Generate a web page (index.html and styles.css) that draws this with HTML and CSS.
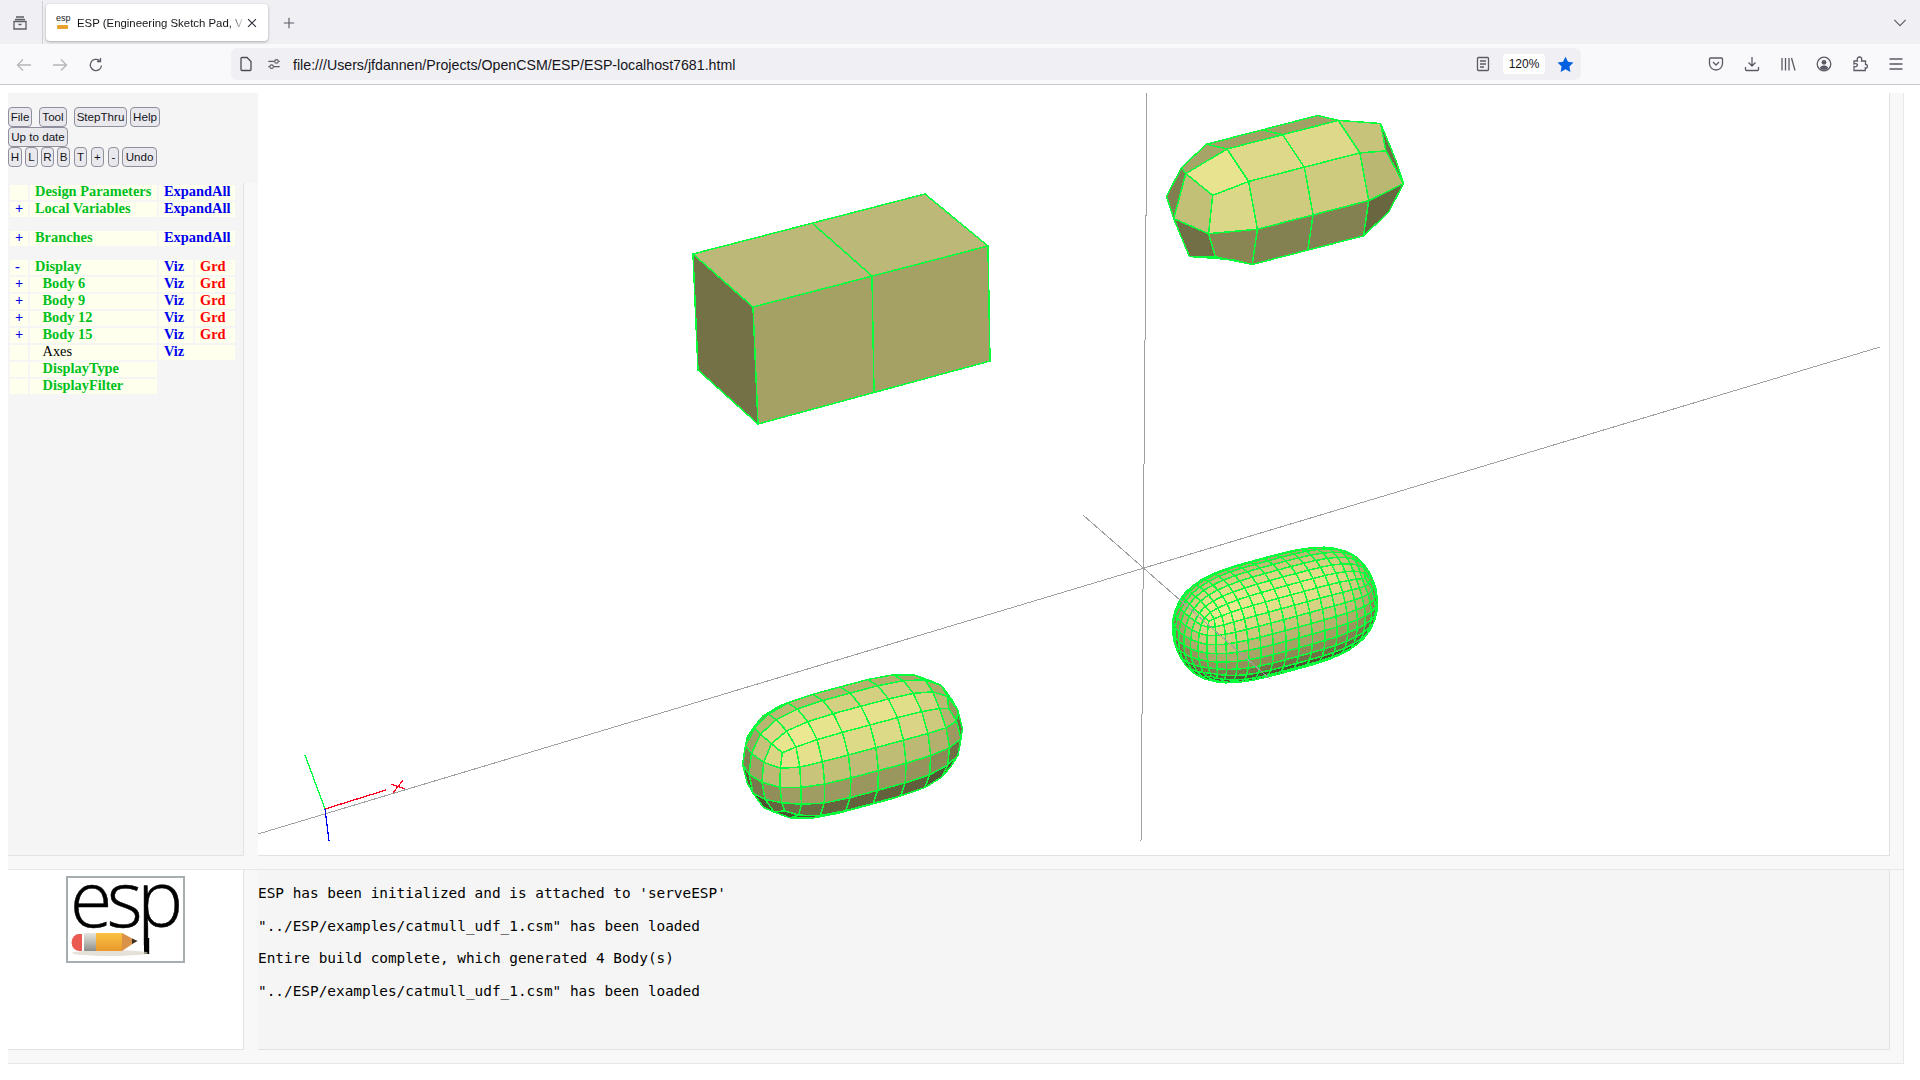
FILE: index.html
```html
<!DOCTYPE html>
<html lang="en">
<head>
<meta charset="utf-8">
<title>ESP (Engineering Sketch Pad, Version)</title>
<link rel="stylesheet" href="styles.css">
</head>
<body>
<header class="chrome">
  <div class="tabbar">
    <div class="tabs-left">
      <svg class="ico" viewBox="0 0 16 16"><path d="M3 4.500h10M4 2h8M2 6.500h12v7.500H2zM6.500 9.500h3"/></svg>
    </div>
    <div class="tab">
      <span class="favicon"><span class="fav-text">esp</span><span class="fav-pencil"></span></span>
      <span class="tab-title">ESP (Engineering Sketch Pad, V</span>
      <svg class="ico ico-x" viewBox="0 0 16 16"><path d="M3.500 3.500l9 9M12.500 3.500l-9 9"/></svg>
    </div>
    <svg class="ico ico-plus" viewBox="0 0 16 16"><path d="M8 2v12M2 8h12"/></svg>
    <svg class="ico ico-chev" viewBox="0 0 16 16"><path d="M1.500 4.500L8 11l6.500-6.500"/></svg>
  </div>
  <div class="toolbar">
    <svg class="ico ico-dim nav-back" viewBox="0 0 16 16"><path d="M15 8H1.500M7 2.500L1.500 8 7 13.500"/></svg>
    <svg class="ico ico-dim nav-fwd" viewBox="0 0 16 16"><path d="M1 8h13.500M9 2.500L14.500 8 9 13.500"/></svg>
    <svg class="ico nav-reload" viewBox="0 0 16 16"><path d="M13.500 8.500A5.600 5.600 0 1 1 11.500 3.600M12.500 1v3.500H9"/></svg>
    <div class="urlbar">
      <svg class="ico ico-doc" viewBox="0 0 16 16"><path d="M3 2.500a1 1 0 0 1 1-1h5l4 4v8a1 1 0 0 1-1 1H4a1 1 0 0 1-1-1z"/></svg>
      <svg class="ico ico-perm" viewBox="0 0 16 16"><path d="M1.500 5h7M13 5h1.500M1.500 11H3M8 11h6.500"/><circle cx="10.800" cy="5" r="2"/><circle cx="5.300" cy="11" r="2"/></svg>
      <span class="url">file:///Users/jfdannen/Projects/OpenCSM/ESP/ESP-localhost7681.html</span>
      <svg class="ico ico-reader" viewBox="0 0 16 16"><path d="M3.500 1.500h9a1 1 0 0 1 1 1v11a1 1 0 0 1-1 1h-9a1 1 0 0 1-1-1v-11a1 1 0 0 1 1-1zM5 5h6M5 8h6M5 11h4"/></svg>
      <span class="zoomlevel">120%</span>
      <svg class="ico ico-star" viewBox="0 0 16 16"><path class="fill-star" d="M8 .7l2.300 4.800 5.200.7-3.800 3.600.9 5.200L8 12.500 3.400 15l.9-5.200L.5 6.200l5.200-.7z"/></svg>
    </div>
    <div class="tool-icons">
      <svg class="ico" viewBox="0 0 16 16"><path d="M2.500 2h11a1 1 0 0 1 1 1v4.500a6.500 6.500 0 0 1-13 0V3a1 1 0 0 1 1-1zM5 6l3 3 3-3"/></svg>
      <svg class="ico" viewBox="0 0 16 16"><path d="M8 1v9M4.500 6.500L8 10l3.500-3.500M1.500 11v2.500a1 1 0 0 0 1 1h11a1 1 0 0 0 1-1V11"/></svg>
      <svg class="ico" viewBox="0 0 16 16"><path d="M2 2v12.500M5.500 2v12.500M9 2v12.500M11.500 2l3.500 12.500"/></svg>
      <svg class="ico" viewBox="0 0 16 16"><circle cx="8" cy="8" r="6.800"/><circle class="fill-ink" cx="8" cy="6.300" r="2.400"/><path class="fill-ink" d="M3.800 12c1-2 2.500-2.500 4.200-2.500s3.200.5 4.200 2.500c-1 1.300-2.500 2-4.200 2s-3.200-.7-4.200-2z"/></svg>
      <svg class="ico" viewBox="0 0 16 16"><path d="M2 5h3.500c-.8-3 .5-4 2-4s2.800 1 2 4H13.500v3.500c3-.5 2 5-.2 3.500v2.500H2v-4c2.500.8 3.500-1 3.500-1.500S4.500 7 2 8z"/></svg>
      <svg class="ico" viewBox="0 0 16 16"><path d="M1.500 3h13M1.500 8h13M1.500 13h13"/></svg>
    </div>
  </div>
</header>

<main class="page">
  <section class="left-top">
    <div class="btn-row">
      <button class="btn w-file">File</button>
      <button class="btn w-tool ml7">Tool</button>
      <button class="btn w-step ml7">StepThru</button>
      <button class="btn w-help ml3">Help</button>
    </div>
    <div class="btn-row">
      <button class="btn w-date">Up to date</button>
    </div>
    <div class="btn-row">
      <button class="btn w-h">H</button>
      <button class="btn w-s ml3">L</button>
      <button class="btn w-s ml3">R</button>
      <button class="btn w-s ml3">B</button>
      <button class="btn w-s ml4">T</button>
      <button class="btn w-s ml4">+</button>
      <button class="btn w-m ml4">-</button>
      <button class="btn w-undo ml3">Undo</button>
    </div>
  </section>

  <section class="frame frame-tree">
    <div class="pane pane-tree">
      <table class="tree">
        <colgroup><col class="c1"><col class="c2"><col class="c3"><col class="c4"></colgroup>
        <tr><td></td><td class="g">Design Parameters</td><td class="b" colspan="2">ExpandAll</td></tr>
        <tr><td class="b pm">+</td><td class="g">Local Variables</td><td class="b" colspan="2">ExpandAll</td></tr>
        <tr class="sp"><td colspan="4"></td></tr>
        <tr><td class="b pm">+</td><td class="g">Branches</td><td class="b" colspan="2">ExpandAll</td></tr>
        <tr class="sp"><td colspan="4"></td></tr>
        <tr><td class="b pm minus">-</td><td class="g">Display</td><td class="b">Viz</td><td class="r">Grd</td></tr>
        <tr><td class="b pm">+</td><td class="g in">Body 6</td><td class="b">Viz</td><td class="r">Grd</td></tr>
        <tr><td class="b pm">+</td><td class="g in">Body 9</td><td class="b">Viz</td><td class="r">Grd</td></tr>
        <tr><td class="b pm">+</td><td class="g in">Body 12</td><td class="b">Viz</td><td class="r">Grd</td></tr>
        <tr><td class="b pm">+</td><td class="g in">Body 15</td><td class="b">Viz</td><td class="r">Grd</td></tr>
        <tr><td></td><td class="k in">Axes</td><td class="b" colspan="2">Viz</td></tr>
        <tr><td></td><td class="g in">DisplayType</td><td class="none" colspan="2"></td></tr>
        <tr><td></td><td class="g in">DisplayFilter</td><td class="none" colspan="2"></td></tr>
      </table>
    </div>
  </section>

  <section class="frame frame-main">
    <div class="pane pane-canvas">
      <svg class="scene" viewBox="258 93 1631 762" width="1631" height="762">
        <line class="axis" x1="258" y1="834" x2="1880" y2="347"/>
        <line class="axis" x1="1147" y1="93" x2="1141" y2="841"/>

        <polygon class="box-top" points="693,254 925,194 988,246 753,307"/>
        <polygon class="box-front" points="753,307 988,246 990,361 758,424"/>
        <polygon class="box-left" points="693,254 753,307 758,424 698,370"/>
        <path class="edge" d="M693,254L925,194L988,246L990,361L758,424L698,370ZM693,254L753,307L758,424M753,307L988,246M812,223L872,276L874,392"/>

        <g class="mesh" data-level="1" data-cx="1285" data-cy="190" data-sx="0.945" data-sy="0.945"></g>
        <g class="mesh" data-level="2" data-cx="852.500" data-cy="746.500" data-sx="0.935" data-sy="0.974"></g>
        <g class="mesh" data-level="3" data-cx="1275" data-cy="615" data-sx="0.885" data-sy="0.935"></g>

        <line class="axis" x1="1083" y1="515" x2="1270" y2="679"/>

        <line class="ax-g" x1="325" y1="809" x2="305" y2="755"/>
        <line class="ax-r" x1="325" y1="809" x2="386" y2="790"/>
        <line class="ax-b" x1="325" y1="809" x2="329" y2="841"/>
        <path class="ax-l" d="M393,793L403,780M391,784L405,789"/>
      </svg>
    </div>
  </section>

  <section class="frame frame-logo">
    <div class="pane pane-logo">
      <svg class="logo" viewBox="0 0 119 87" width="119" height="87">
        <defs>
          <linearGradient id="pb" x1="0" y1="0" x2="0" y2="1"><stop offset="0" stop-color="#fbc344"/><stop offset="1" stop-color="#e8982a"/></linearGradient>
          <linearGradient id="pm" x1="0" y1="0" x2="0" y2="1"><stop offset="0" stop-color="#e6e6e0"/><stop offset=".5" stop-color="#bdbdb8"/><stop offset="1" stop-color="#8c8c88"/></linearGradient>
        </defs>
        <rect class="logo-border" x="1" y="1" width="117" height="85"/>
        <text class="logo-text" x="4" y="51">esp</text>
        <rect class="logo-stem" x="78" y="62" width="5.200" height="16"/>
        <ellipse class="pencil-shadow" cx="44" cy="77" rx="38" ry="3"/>
        <path class="p-eraser" d="M16 58h-3a7 8 0 0 0 0 17h3z"/>
        <rect x="18" y="57" width="13" height="18" fill="url(#pm)"/>
        <rect x="30" y="57" width="26" height="18" fill="url(#pb)"/>
        <path class="p-wood" d="M56 57l15 8-15 10z"/>
        <path class="p-tip" d="M66 62.500l5.500 2.500-5.500 3z"/>
      </svg>
    </div>
  </section>

  <section class="frame frame-msg">
    <div class="pane pane-msg">
      <p>ESP has been initialized and is attached to 'serveESP'</p>
      <p>"../ESP/examples/catmull_udf_1.csm" has been loaded</p>
      <p>Entire build complete, which generated 4 Body(s)</p>
      <p>"../ESP/examples/catmull_udf_1.csm" has been loaded</p>
    </div>
  </section>
</main>
<script src="script.js"></script>
</body>
</html>
```
FILE: styles.css
```css
* { box-sizing: border-box; }
html, body { margin: 0; padding: 0; background: #fff; overflow: hidden; }
body { width: 1920px; height: 1080px; font-family: "Liberation Sans", Arial, sans-serif; color: #15141a; }

.ico { width: 16px; height: 16px; flex: none; fill: none; stroke: #5b5b66; stroke-width: 1.3; }
.ico-dim { stroke: #b4b4bb; }

.chrome { height: 85px; border-bottom: 1px solid #c9c9cf; }
.tabbar { height: 44px; background: #f0f0f4; display: flex; align-items: center; padding-top: 1px; }
.tabs-left { width: 43px; height: 43px; padding-left: 12px; display: flex; align-items: center; border-right: 1px solid #cfcfd6; }
.tab { margin-left: 3px; width: 222px; height: 37px; background: #fff; border-radius: 4px; box-shadow: 0 1px 3px rgba(0,0,0,.3); display: flex; align-items: center; padding-left: 10px; }
.favicon { width: 15px; height: 17px; position: relative; flex: none; }
.fav-text { position: absolute; left: 0; top: -2px; font-size: 9px; line-height: 12px; color: #222; }
.fav-pencil { position: absolute; left: 1px; top: 11px; width: 11px; height: 4px; background: #e9a12e; border-radius: 1px; }
.tab-title { margin-left: 6px; width: 166px; flex: none; font-size: 11.400px; white-space: nowrap; -webkit-mask-image: linear-gradient(90deg, #000 92%, rgba(0,0,0,.15)); mask-image: linear-gradient(90deg, #000 92%, rgba(0,0,0,.15)); }
.ico-x { width: 14px; height: 14px; margin-left: 2px; stroke: #2b2a33; }
.ico-plus { width: 14px; height: 14px; margin-left: 14px; }
.ico-chev { width: 14px; height: 14px; margin-left: auto; margin-right: 13px; }

.toolbar { height: 40px; background: #f9f9fb; display: flex; align-items: center; padding-left: 16px; }
.nav-back, .nav-fwd, .nav-reload { margin-top: 1px; }
.nav-fwd { margin-left: 20px; }
.nav-reload { margin-left: 20px; }
.urlbar { margin-left: 127px; width: 1350px; height: 32px; background: #f0f0f4; border-radius: 6px; display: flex; align-items: center; padding-left: 7px; }
.ico-doc { stroke: #4a4a55; }
.ico-perm { margin-left: 13px; width: 14px; height: 14px; }
.url { margin: 1px 0 0 12px; font-size: 14.200px; white-space: nowrap; width: 1182px; flex: none; }
.zoomlevel { margin-left: 12px; width: 42px; height: 20px; background: #fff; border-radius: 4px; font-size: 12px; line-height: 20px; text-align: center; }
.ico-star { margin-left: 12px; width: 17px; height: 17px; stroke: none; }
.fill-star { fill: #0060df; stroke: none; }
.fill-ink { fill: #5b5b66; stroke: none; }
.tool-icons { margin-left: 127px; display: flex; gap: 20px; }

.page { display: grid; grid-template-columns: 250px 1646px; grid-template-rows: 90px 687px 194px; margin: 8px 0 0 8px; }
.left-top { background: #f5f5f5; padding-top: 14px; grid-column: 1; grid-row: 1; }
.btn-row { display: flex; height: 20px; }
.btn { height: 20px; padding: 0; font: 11.600px/18px "Liberation Sans", Arial, sans-serif; color: #15141a; background: #e9e9ed; border: 1px solid #8f8f9d; border-radius: 4px; text-align: center; }
.w-file { width: 24px; } .w-tool { width: 28px; } .w-step { width: 53px; } .w-help { width: 30px; }
.w-date { width: 60px; } .w-h { width: 14px; } .w-s { width: 13px; } .w-m { width: 11px; } .w-undo { width: 35px; }
.ml3 { margin-left: 3px; } .ml4 { margin-left: 4px; } .ml7 { margin-left: 7px; }

.frame { background: #f8f8f8; border-right: 1px solid #e8e8e8; border-bottom: 1px solid #e8e8e8; padding: 0 13px 13px 0; }
.pane { border-right: 1px solid #e2e2e2; border-bottom: 1px solid #e2e2e2; height: 100%; overflow: hidden; }
.frame-tree { grid-column: 1; grid-row: 2; border-right: 0; padding-right: 14px; }
.frame-main { grid-column: 2; grid-row: 1 / span 2; }
.frame-logo { grid-column: 1; grid-row: 3; border-right: 0; padding-right: 14px; }
.frame-msg { grid-column: 2; grid-row: 3; }

.pane-tree { background: #f5f5f5; }
.tree { border-collapse: separate; border-spacing: 2px; table-layout: fixed; width: 229px; font: bold 14.400px/12px "Liberation Serif", "Times New Roman", serif; }
.c1 { width: 18px; } .c2 { width: 127px; } .c3 { width: 34px; } .c4 { width: 40px; }
.tree td { height: 15px; padding: 0 0 3px 5px; background: #ffffee; white-space: nowrap; }
.tree .sp td { height: 10px; background: transparent; padding: 0; }
.tree td.none { background: transparent; }
.tree .g { color: #00bf20; }
.tree .b { color: #0000ee; }
.tree .r { color: #f00; }
.tree .k { color: #000; font-weight: normal; }
.tree .in { padding-left: 12.500px; }
.tree .pm { padding-left: 5px; }

.pane-canvas { background: #fff; }
.scene { display: block; }
.axis { stroke: #a0a0a0; stroke-width: 1; shape-rendering: crispEdges; }
.box-top { fill: #bcb978; }
.box-front { fill: #a5a165; }
.box-left { fill: #757147; }
.edge { fill: none; stroke: #08ff3c; stroke-width: 1.5; shape-rendering: crispEdges; }
.mesh polygon { stroke: #08ff3c; stroke-width: 1.5; stroke-linejoin: round; shape-rendering: crispEdges; }
.ax-g { stroke: #00ff40; stroke-width: 1.3; shape-rendering: crispEdges; }
.ax-r { stroke: #ff0020; stroke-width: 1.3; shape-rendering: crispEdges; }
.ax-b { stroke: #0000f0; stroke-width: 1.3; shape-rendering: crispEdges; }
.ax-l { stroke: #ff0020; stroke-width: 1.2; fill: none; shape-rendering: crispEdges; }

.pane-logo { background: #fff; padding-top: 6px; display: flex; justify-content: center; align-items: flex-start; overflow: visible; }
.logo { display: block; overflow: visible; }
.logo-border { fill: #fff; stroke: #a7aeb1; stroke-width: 2; }
.logo-text { font-family: "Open Sans", "Noto Sans", sans-serif; font-weight: 300; font-size: 77px; letter-spacing: -5.500px; fill: #000; stroke: #000; stroke-width: .5px; }
.logo-stem { fill: #000; }
.pencil-shadow { fill: #d9d4c8; opacity: .7; }
.p-eraser { fill: #ea5a50; }
.p-wood { fill: #d9924a; }
.p-tip { fill: #3a3026; }

.pane-msg { background: #f5f5f5; padding-top: 14px; font-family: "DejaVu Sans Mono", monospace; font-size: 14.400px; }
.pane-msg p { margin: 0 0 14.400px; line-height: 18.300px; white-space: pre; color: #000; }
```
FILE: script.js
```js
// Catmull-Clark subdivision of the 2x1x1 box, drawn as flat-shaded quads.
var SVGNS = 'http://www.w3.org/2000/svg';
var EX = [117.8, -30.3], EY = [-5, -117], EZ = [59.4, 52.7];
var LIGHT = [-0.19, 0.48, 0.38], AMBIENT = 0.33, BASE = [244, 240, 150];

function boxMesh() {
  var v = [], f = [];
  function id(i, j, k) { return i * 4 + j * 2 + k; }
  for (var i = 0; i < 3; i++) for (var j = 0; j < 2; j++) for (var k = 0; k < 2; k++) {
    v.push([i - 1, j - 0.5, k - 0.5]);
  }
  for (var n = 0; n < 2; n++) {
    f.push([id(n,0,1), id(n+1,0,1), id(n+1,1,1), id(n,1,1)]);
    f.push([id(n,0,0), id(n,1,0), id(n+1,1,0), id(n+1,0,0)]);
    f.push([id(n,1,1), id(n+1,1,1), id(n+1,1,0), id(n,1,0)]);
    f.push([id(n,0,0), id(n+1,0,0), id(n+1,0,1), id(n,0,1)]);
  }
  f.push([id(2,0,1), id(2,0,0), id(2,1,0), id(2,1,1)]);
  f.push([id(0,0,0), id(0,0,1), id(0,1,1), id(0,1,0)]);
  return { v: v, f: f };
}

function avg(pts) {
  var s = [0, 0, 0];
  pts.forEach(function (p) { s[0] += p[0]; s[1] += p[1]; s[2] += p[2]; });
  return [s[0] / pts.length, s[1] / pts.length, s[2] / pts.length];
}

function subdivide(m) {
  var facePts = m.f.map(function (f) { return avg(f.map(function (i) { return m.v[i]; })); });
  var edges = {}, vFaces = m.v.map(function () { return []; }), vEdges = m.v.map(function () { return []; });
  function key(a, b) { return a < b ? a + '_' + b : b + '_' + a; }
  m.f.forEach(function (f, fi) {
    f.forEach(function (a, n) {
      var b = f[(n + 1) % 4], k = key(a, b);
      if (!edges[k]) { edges[k] = { a: a, b: b, faces: [] }; vEdges[a].push(k); vEdges[b].push(k); }
      edges[k].faces.push(fi);
      vFaces[a].push(fi);
    });
  });
  var nv = [];
  m.v.forEach(function (p, i) {
    var n = vFaces[i].length;
    var F = avg(vFaces[i].map(function (fi) { return facePts[fi]; }));
    var R = avg(vEdges[i].map(function (k) { return avg([m.v[edges[k].a], m.v[edges[k].b]]); }));
    nv.push([0, 1, 2].map(function (c) { return (F[c] + 2 * R[c] + (n - 3) * p[c]) / n; }));
  });
  var base = nv.length;
  facePts.forEach(function (p) { nv.push(p); });
  Object.keys(edges).forEach(function (k) {
    var e = edges[k];
    e.idx = nv.length;
    nv.push(avg([m.v[e.a], m.v[e.b], facePts[e.faces[0]], facePts[e.faces[1]]]));
  });
  var nf = [];
  m.f.forEach(function (f, fi) {
    f.forEach(function (a, n) {
      var next = f[(n + 1) % 4], prev = f[(n + 3) % 4];
      nf.push([a, edges[key(a, next)].idx, base + fi, edges[key(a, prev)].idx]);
    });
  });
  return { v: nv, f: nf };
}

function normal(a, b, c, d) {
  var u = [c[0]-a[0], c[1]-a[1], c[2]-a[2]], w = [d[0]-b[0], d[1]-b[1], d[2]-b[2]];
  var n = [u[1]*w[2]-u[2]*w[1], u[2]*w[0]-u[0]*w[2], u[0]*w[1]-u[1]*w[0]];
  var l = Math.sqrt(n[0]*n[0]+n[1]*n[1]+n[2]*n[2]) || 1;
  return [n[0]/l, n[1]/l, n[2]/l];
}

document.querySelectorAll('.mesh').forEach(function (g) {
  var m = boxMesh(), level = +g.dataset.level, cx = +g.dataset.cx, cy = +g.dataset.cy, sx = +g.dataset.sx, sy = +g.dataset.sy;
  for (var i = 0; i < level; i++) m = subdivide(m);
  function proj(p) {
    return [cx + sx * (p[0]*EX[0] + p[1]*EY[0] + p[2]*EZ[0]), cy + sy * (p[0]*EX[1] + p[1]*EY[1] + p[2]*EZ[1])];
  }
  m.f.forEach(function (f) {
    var pts = f.map(function (i) { return proj(m.v[i]); });
    var area = 0;
    pts.forEach(function (p, n) { var q = pts[(n + 1) % 4]; area += p[0]*q[1] - q[0]*p[1]; });
    if (area > 0) return;
    var nrm = normal(m.v[f[0]], m.v[f[1]], m.v[f[2]], m.v[f[3]]);
    var b = Math.min(1, AMBIENT + Math.max(0, nrm[0]*LIGHT[0] + nrm[1]*LIGHT[1] + nrm[2]*LIGHT[2]));
    var poly = document.createElementNS(SVGNS, 'polygon');
    poly.setAttribute('points', pts.map(function (p) { return p[0].toFixed(1) + ',' + p[1].toFixed(1); }).join(' '));
    poly.setAttribute('fill', 'rgb(' + BASE.map(function (c) { return Math.round(c * b); }).join(',') + ')');
    g.appendChild(poly);
  });
});
```
